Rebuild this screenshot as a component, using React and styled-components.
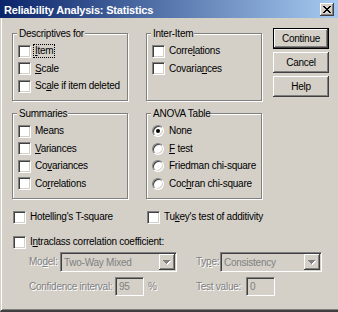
import React from 'react';
import styled, { createGlobalStyle } from 'styled-components';

const Global = createGlobalStyle`
  html, body { margin: 0; padding: 0; }
  body {
    background: #d4d0c8;
    font-family: "Liberation Sans", Arial, sans-serif;
    font-size: 10px;
    letter-spacing: -0.25px;
    color: #000;
  }
  #root { width: 338px; height: 312px; overflow: hidden; }
`;

const Window = styled.div`
  width: 338px;
  height: 312px;
  box-sizing: border-box;
  display: flex;
  flex-direction: column;
  background: #d4d0c8;
`;

const TitleBar = styled.div`
  flex: none;
  height: 18px;
  display: flex;
  align-items: flex-start;
  background: linear-gradient(to right, #0a246a, #a6caf0);
`;

const TitleText = styled.div`
  flex: 1;
  color: #fff;
  font-weight: bold;
  font-size: 11px;
  letter-spacing: -0.2px;
  line-height: 14px;
  padding: 3px 0 0 4px;
  white-space: nowrap;
`;

const CloseBtn = styled.div`
  flex: none;
  box-sizing: border-box;
  width: 14px;
  height: 13px;
  margin: 3px 4px 0 0;
  background: #d4d0c8;
  box-shadow: inset -1px -1px #404040, inset 1px 1px #fff, inset -2px -2px #808080;
  display: flex;
  align-items: center;
  justify-content: center;
`;

const Body = styled.div`
  flex: 1;
  box-sizing: border-box;
  border-left: 1px solid #d4d0c8;
  border-bottom: 2px solid #404040;
  box-shadow: inset 1px 0 #fff, inset 0 -1px #808080;
  padding: 10px 0 0 11px;
  display: flex;
  flex-direction: column;
`;

const Top = styled.div`
  display: flex;
  align-items: flex-start;
`;

const Groups = styled.div`
  display: grid;
  grid-template-columns: 116px 116px;
  grid-template-rows: 68px 86px;
  column-gap: 18px;
  row-gap: 12px;
  margin-top: 5px;
`;

const Group = styled.div`
  position: relative;
  box-sizing: border-box;
  border: 1px solid #808080;
  box-shadow: inset 1px 1px #fff, 1px 1px #fff;
  padding: 8.5px 0 0 5px;
  display: flex;
  flex-direction: column;
`;

const Legend = styled.span`
  position: absolute;
  top: -6px;
  left: 4px;
  padding: 0 1px 0 2px;
  line-height: 12px;
  background: #d4d0c8;
  white-space: nowrap;
`;

const ButtonCol = styled.div`
  margin-left: 11px;
  display: flex;
  flex-direction: column;
  gap: 3px;
`;

const Button = styled.button`
  box-sizing: border-box;
  width: 56px;
  height: 21px;
  margin: 0;
  padding: 0;
  font: inherit;
  letter-spacing: inherit;
  color: #000;
  background: #d4d0c8;
  border: ${(p) => (p.$default ? '1px solid #000' : 'none')};
  box-shadow: inset -1px -1px #404040, inset 1px 1px #fff, inset -2px -2px #808080;
  outline: none;
`;

const Row = styled.div`
  display: flex;
  align-items: center;
  height: ${(p) => p.$h || 17.5}px;
  white-space: nowrap;
`;

const Box = styled.span`
  flex: none;
  box-sizing: border-box;
  width: 13px;
  height: 13px;
  margin-right: 3px;
  background: #fff;
  border: 1px solid;
  border-color: #808080 #fff #fff #808080;
  box-shadow: inset 1px 1px #404040, inset -1px -1px #d4d0c8;
`;

const RadioSlot = styled.span`
  flex: none;
  width: 13px;
  margin-right: 3px;
  display: flex;
`;

const RadioCircle = styled.span`
  box-sizing: border-box;
  width: 12px;
  height: 12px;
  border-radius: 50%;
  background: #fff;
  border: 1px solid;
  border-color: #808080 #fff #fff #808080;
  box-shadow: inset 1px 1px #404040, inset -1px -1px #d4d0c8;
  display: flex;
  align-items: center;
  justify-content: center;
`;

const Dot = styled.span`
  width: 4px;
  height: 4px;
  border-radius: 50%;
  background: #000;
`;

const Text = styled.span`
  line-height: 12px;
  padding: 0 1px;
  outline: ${(p) => (p.$focus ? '1px dotted #000' : 'none')};
`;

const U = styled.span`
  text-decoration: underline;
`;

const CheckLine = styled.div`
  display: grid;
  grid-template-columns: 134px auto;
  margin: ${(p) => p.$mt}px 0 0 1px;
`;

const Params = styled.div`
  display: grid;
  grid-template-columns: 167px auto;
  grid-template-rows: 20px 19px;
  row-gap: 5px;
  margin: 1px 0 0 17px;
`;

const Cell = styled.div`
  display: flex;
  align-items: center;
  white-space: nowrap;
`;

const DimLabel = styled.span`
  flex: none;
  width: ${(p) => p.$w}px;
  color: #808080;
  text-shadow: 1px 1px 0 #fff;
  line-height: 12px;
`;

const Sunken = styled.div`
  flex: none;
  box-sizing: border-box;
  width: ${(p) => p.$w}px;
  height: 100%;
  border: 1px solid;
  border-color: #808080 #fff #fff #808080;
  box-shadow: inset 1px 1px #404040, inset -1px -1px #d4d0c8;
  background: #d4d0c8;
  padding: 1px;
  display: flex;
  align-items: center;
  color: #808080;
`;

const FieldText = styled.span`
  flex: 1;
  padding-left: 2px;
  white-space: nowrap;
`;

const ArrowBtn = styled.span`
  flex: none;
  box-sizing: border-box;
  width: 16px;
  height: 100%;
  margin-left: auto;
  background: #d4d0c8;
  box-shadow: inset -1px -1px #404040, inset 1px 1px #fff, inset -2px -2px #808080;
  display: flex;
  align-items: center;
  justify-content: center;
`;

const Percent = styled.span`
  margin-left: 4px;
  color: #808080;
  text-shadow: 1px 1px 0 #fff;
`;

const CloseGlyph = () => (
  <svg width="8" height="7" viewBox="0 0 8 7" shapeRendering="crispEdges">
    {[
      [0, 0], [6, 0], [1, 1], [5, 1], [2, 2], [4, 2], [3, 3], [2, 4], [4, 4], [1, 5], [5, 5], [0, 6], [6, 6],
    ].map(([x, y], i) => (
      <rect key={i} x={x} y={y} width="2" height="1" fill="#000" />
    ))}
    <rect x="3" y="2" width="2" height="3" fill="#000" />
  </svg>
);

const ArrowGlyph = () => (
  <svg width="8" height="5" viewBox="0 0 8 5" shapeRendering="crispEdges">
    <rect x="1" y="1" width="7" height="1" fill="#fff" />
    <rect x="2" y="2" width="5" height="1" fill="#fff" />
    <rect x="3" y="3" width="3" height="1" fill="#fff" />
    <rect x="4" y="4" width="1" height="1" fill="#fff" />
    <rect x="0" y="0" width="7" height="1" fill="#808080" />
    <rect x="1" y="1" width="5" height="1" fill="#808080" />
    <rect x="2" y="2" width="3" height="1" fill="#808080" />
    <rect x="3" y="3" width="1" height="1" fill="#808080" />
  </svg>
);

const CheckItem = ({ children, focus, h }) => (
  <Row $h={h}>
    <Box />
    <Text $focus={focus}>{children}</Text>
  </Row>
);

const RadioItem = ({ children, checked }) => (
  <Row>
    <RadioSlot>
      <RadioCircle>{checked && <Dot />}</RadioCircle>
    </RadioSlot>
    <Text>{children}</Text>
  </Row>
);

export default function App() {
  return (
    <>
      <Global />
      <Window>
        <TitleBar>
          <TitleText>Reliability Analysis: Statistics</TitleText>
          <CloseBtn>
            <CloseGlyph />
          </CloseBtn>
        </TitleBar>
        <Body>
          <Top>
            <Groups>
              <Group>
                <Legend>Descriptives for</Legend>
                <CheckItem focus>
                  <U>I</U>tem
                </CheckItem>
                <CheckItem>
                  <U>S</U>cale
                </CheckItem>
                <CheckItem>
                  Sc<U>a</U>le if item deleted
                </CheckItem>
              </Group>
              <Group>
                <Legend>Inter-Item</Legend>
                <CheckItem>
                  Corre<U>l</U>ations
                </CheckItem>
                <CheckItem>
                  Covaria<U>n</U>ces
                </CheckItem>
              </Group>
              <Group>
                <Legend>Summaries</Legend>
                <CheckItem>Means</CheckItem>
                <CheckItem>
                  <U>V</U>ariances
                </CheckItem>
                <CheckItem>
                  Co<U>v</U>ariances
                </CheckItem>
                <CheckItem>
                  Co<U>r</U>relations
                </CheckItem>
              </Group>
              <Group>
                <Legend>ANOVA Table</Legend>
                <RadioItem checked>None</RadioItem>
                <RadioItem>
                  <U>F</U> test
                </RadioItem>
                <RadioItem>Friedman chi-square</RadioItem>
                <RadioItem>
                  Coc<U>h</U>ran chi-square
                </RadioItem>
              </Group>
            </Groups>
            <ButtonCol>
              <Button $default>Continue</Button>
              <Button>Cancel</Button>
              <Button>Help</Button>
            </ButtonCol>
          </Top>
          <CheckLine $mt={9}>
            <CheckItem h={18}>Hotelling's T-square</CheckItem>
            <CheckItem h={18}>
              Tu<U>k</U>ey's test of additivity
            </CheckItem>
          </CheckLine>
          <CheckLine $mt={7}>
            <CheckItem h={18}>
              I<U>n</U>traclass correlation coefficient:
            </CheckItem>
          </CheckLine>
          <Params>
            <Cell>
              <DimLabel $w={31}>
                Mo<U>d</U>el:
              </DimLabel>
              <Sunken $w={117}>
                <FieldText>Two-Way Mixed</FieldText>
                <ArrowBtn>
                  <ArrowGlyph />
                </ArrowBtn>
              </Sunken>
            </Cell>
            <Cell>
              <DimLabel $w={24}>
                Ty<U>p</U>e:
              </DimLabel>
              <Sunken $w={102}>
                <FieldText>Consistency</FieldText>
                <ArrowBtn>
                  <ArrowGlyph />
                </ArrowBtn>
              </Sunken>
            </Cell>
            <Cell>
              <DimLabel $w={86}>Confidence interval:</DimLabel>
              <Sunken $w={29}>
                <FieldText>95</FieldText>
              </Sunken>
              <Percent>%</Percent>
            </Cell>
            <Cell>
              <DimLabel $w={50}>Test value:</DimLabel>
              <Sunken $w={29}>
                <FieldText>0</FieldText>
              </Sunken>
            </Cell>
          </Params>
        </Body>
      </Window>
    </>
  );
}
